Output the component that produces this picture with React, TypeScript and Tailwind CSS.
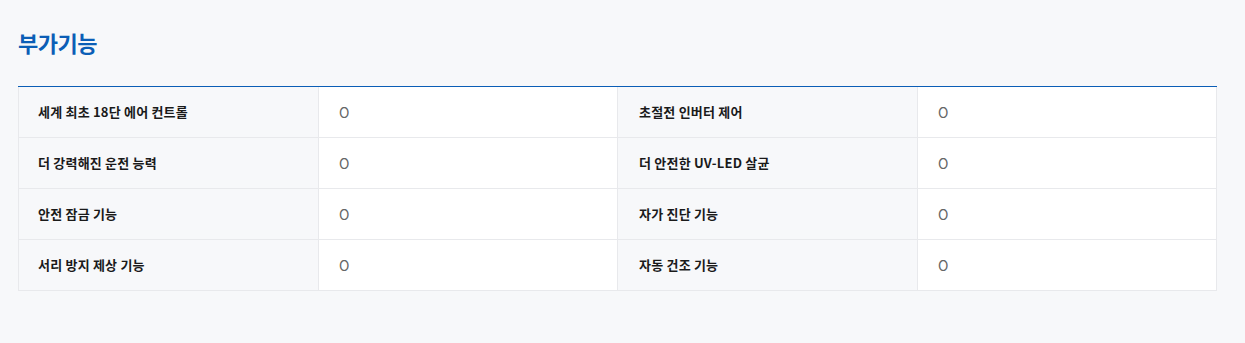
import React from "react";

const rows: [string, string, string, string][] = [
  ["세계 최초 18단 에어 컨트롤", "O", "초절전 인버터 제어", "O"],
  ["더 강력해진 운전 능력", "O", "더 안전한 UV-LED 살균", "O"],
  ["안전 잠금 기능", "O", "자가 진단 기능", "O"],
  ["서리 방지 제상 기능", "O", "자동 건조 기능", "O"],
];

export default function App() {
  return (
    <div
      className="w-[1245px] h-[343px] bg-[#f7f8fa] pt-[27px] px-[18px]"
      style={{ fontFamily: '"Noto Sans CJK KR", "Noto Sans", sans-serif' }}
    >
      <h2 className="text-[22px] leading-[30px] font-bold text-[#0b5eb6] tracking-[-0.5px]">부가기능</h2>
      <div className="mt-[29px] w-[1199px]">
        <div className="h-px bg-[#0b5eb6]" />
        <div className="border-l border-r border-[#e8e9ec]">
          {rows.map((r, i) => (
            <div key={i} className="grid grid-cols-[299px_299px_300px_1fr] border-b border-[#e8e9ec] h-[51px]">
              <div className="flex items-center pl-[19px] text-[13px] font-bold tracking-[0.2px] text-[#1a1a1a]">{r[0]}</div>
              <div className="flex items-center pl-[20px] bg-white border-l border-[#e8e9ec] text-[14px] text-[#666]">{r[1]}</div>
              <div className="flex items-center pl-[21px] border-l border-[#e8e9ec] text-[13px] font-bold tracking-[0.2px] text-[#1a1a1a]">{r[2]}</div>
              <div className="flex items-center pl-[20px] bg-white border-l border-[#e8e9ec] text-[14px] text-[#666]">{r[3]}</div>
            </div>
          ))}
        </div>
      </div>
    </div>
  );
}
